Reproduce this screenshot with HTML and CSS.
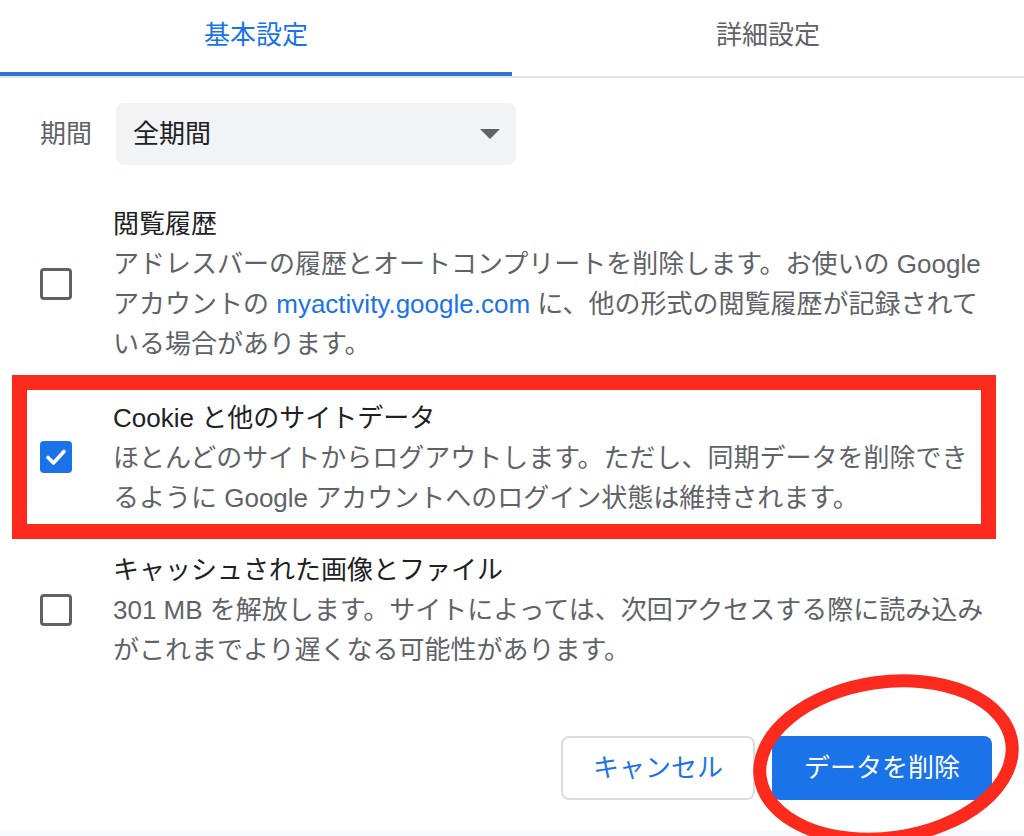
FILE: index.html
```html
<!DOCTYPE html>
<html lang="ja">
<head>
<meta charset="utf-8">
<title>閲覧履歴データの削除</title>
<link rel="stylesheet" href="styles.css">
</head>
<body>
<div class="dialog">
  <div class="tabs">
    <div class="tab active">基本設定</div>
    <div class="tab">詳細設定</div>
  </div>

  <div class="period">
    <span class="period-label">期間</span>
    <div class="select">
      <span>全期間</span>
      <span class="caret"></span>
    </div>
  </div>

  <div class="row">
    <span class="cb"></span>
    <div class="txt">
      <div class="ttl">閲覧履歴</div>
      <div class="desc">アドレスバーの履歴とオートコンプリートを削除します。お使いの Google アカウントの <a class="link">myactivity.google.com</a> に、他の形式の閲覧履歴が記録されている場合があります。</div>
    </div>
  </div>

  <div class="row highlight">
    <span class="cb checked"><svg viewBox="0 0 32 32" width="32" height="32"><polyline points="8,16.5 13.5,22 24,10.5" fill="none" stroke="#fff" stroke-width="3.6" stroke-linecap="round" stroke-linejoin="round"/></svg></span>
    <div class="txt">
      <div class="ttl">Cookie と他のサイトデータ</div>
      <div class="desc">ほとんどのサイトからログアウトします。ただし、同期データを削除できるように Google アカウントへのログイン状態は維持されます。</div>
    </div>
    <span class="redbox"></span>
  </div>

  <div class="row">
    <span class="cb"></span>
    <div class="txt">
      <div class="ttl">キャッシュされた画像とファイル</div>
      <div class="desc">301 MB を解放します。サイトによっては、次回アクセスする際に読み込みがこれまでより遅くなる可能性があります。</div>
    </div>
  </div>

  <div class="actions">
    <button class="btn cancel">キャンセル</button>
    <button class="btn primary">データを削除</button>
  </div>
  <div class="strip"></div>

  <svg class="circle" width="1024" height="836" viewBox="0 0 1024 836">
    <ellipse cx="886" cy="760" rx="127" ry="78" transform="rotate(-8 886 760)" fill="none" stroke="#fc2a1c" stroke-width="13"/>
  </svg>
</div>
</body>
</html>
```

FILE: styles.css
```css
* { box-sizing: border-box; }

html, body {
  margin: 0;
  padding: 0;
  background: #fff;
}

body {
  font-family: "Liberation Sans", "Noto Sans CJK JP", sans-serif;
  font-size: 26px;
  color: #202124;
  width: 1024px;
  height: 836px;
  overflow: hidden;
}

.dialog {
  position: relative;
  width: 1024px;
  height: 836px;
}

.tabs {
  display: flex;
  border-bottom: 2px solid #e3e3e3;
}

.tab {
  flex: 1;
  height: 76px;
  line-height: 70px;
  text-align: center;
  color: #5f6368;
  border-bottom: 4px solid transparent;
}

.tab.active {
  color: #1a73e8;
  border-bottom-color: #3174d6;
}

.period {
  display: flex;
  align-items: center;
  gap: 24px;
  margin-top: 25px;
  padding-left: 40px;
}

.period-label {
  color: #5f6368;
  padding-bottom: 5px;
}

.select {
  width: 400px;
  height: 62px;
  background: #f1f3f4;
  border-radius: 8px;
  display: flex;
  align-items: center;
  justify-content: space-between;
  padding: 0 16px 5px 17px;
  color: #202124;
}

.caret {
  width: 0;
  height: 0;
  border-left: 10px solid transparent;
  border-right: 10px solid transparent;
  border-top: 10px solid #5f6368;
  margin-top: 4px;
}

.period + .row {
  margin-top: 23px;
}

.row {
  position: relative;
  display: flex;
  align-items: center;
  gap: 41px;
  padding: 16px 31px 16px 40px;
}

.cb {
  flex: none;
  width: 32px;
  height: 32px;
  border: 3px solid #5f6368;
  border-radius: 4px;
}

.cb.checked {
  border: none;
  background: #1a73e8;
  display: flex;
}

.txt {
  width: 880px;
  line-height: 40px;
}

.ttl {
  color: #202124;
}

.desc {
  color: #5f6368;
}

.link {
  color: #1a73e8;
  text-decoration: none;
}

.highlight .txt {
  margin-top: 2px;
}

.redbox {
  position: absolute;
  left: 12px;
  top: -5px;
  width: 984px;
  height: 164px;
  border: 15px solid #fc2a1c;
  pointer-events: none;
}

.actions {
  display: flex;
  justify-content: flex-end;
  gap: 17px;
  padding: 50px 32px 30px 0;
}

.btn {
  font-family: inherit;
  font-size: 26px;
  height: 64px;
  padding: 0;
  border-radius: 8px;
  line-height: 1;
  cursor: pointer;
  text-align: center;
}

.cancel {
  width: 194px;
  background: #fff;
  color: #1a73e8;
  border: 2px solid #dadce0;
}

.primary {
  width: 220px;
  background: #1a73e8;
  color: #fff;
  border: none;
}

.strip {
  height: 8px;
  background: #f8f9fa;
}

.circle {
  position: absolute;
  left: 0;
  top: 0;
  pointer-events: none;
}
```
